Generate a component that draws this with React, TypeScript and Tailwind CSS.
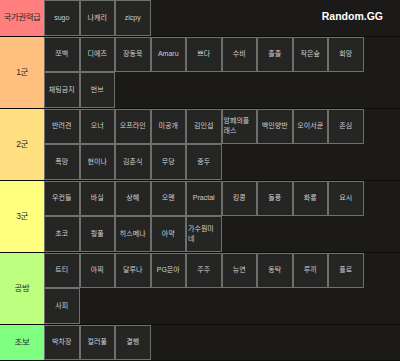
import React from 'react'

const tiers = [
  { label: '국가권력급', color: 'bg-[#ff7f7f]', items: ['sugo', '나캐리', 'zicpy'] },
  {
    label: '1군',
    color: 'bg-[#ffbf7f]',
    items: ['쪼백', '디에즈', '장동욱', 'Amaru', '쁘다', '수비', '졸졸', '작은숲', '회망', '채팅금지', '번브'],
  },
  {
    label: '2군',
    color: 'bg-[#ffdf7f]',
    items: ['반려견', '오너', '오프라인', '미공개', '김인섭', '암페의플래스', '백인양반', '오이서쿤', '존심', '폭망', '현이나', '김춘식', '무당', '종두'],
  },
  {
    label: '3군',
    color: 'bg-[#ffff7f]',
    items: ['우컨들', '바실', '상혜', '오멘', 'Practal', '킹콩', '돌풍', '화룡', '요시', '초코', '뭥풀', '히스메나', '아약', '가수원미네'],
  },
  {
    label: '공방',
    color: 'bg-[#bfff7f]',
    items: ['트티', '아찌', '달루나', 'PG은아', '주주', '뉴연', '동탁', '루끼', '플로', '사피'],
  },
  { label: '초보', color: 'bg-[#7fff7f]', items: ['박차장', '컬러풀', '결행'] },
]

const font = "font-['Liberation_Sans','Noto_Sans_CJK_KR',sans-serif]"

export default function App() {
  return (
    <div className={`w-[400px] h-[361px] overflow-hidden bg-[#1b1a18] ${font}`}>
      {tiers.map((tier, i) => (
        <div key={tier.label} className="flex border-b border-[#0c0c0b]">
          {/* label */}
          <div
            className={`${tier.color} w-[44px] shrink-0 flex items-center justify-center text-[8.5px] text-[#2a2a2a] tracking-tighter`}
          >
            {tier.label}
          </div>
          {/* items */}
          <div className="flex flex-wrap content-start w-[321px]">
            {tier.items.map((item) => (
              <div
                key={item}
                className="w-[35.5px] h-[35.5px] bg-[#252524] border border-[#6e6e6c] flex items-center justify-center px-px text-[7px] leading-[10px] text-[#cfcfcf]"
              >
                <span className="text-left break-all">{item}</span>
              </div>
            ))}
          </div>
          {i === 0 && (
            <div className="flex-1 flex items-start justify-end pt-[9px] pr-[17px] text-[10.5px] font-bold text-white">
              Random.GG
            </div>
          )}
        </div>
      ))}
    </div>
  )
}
